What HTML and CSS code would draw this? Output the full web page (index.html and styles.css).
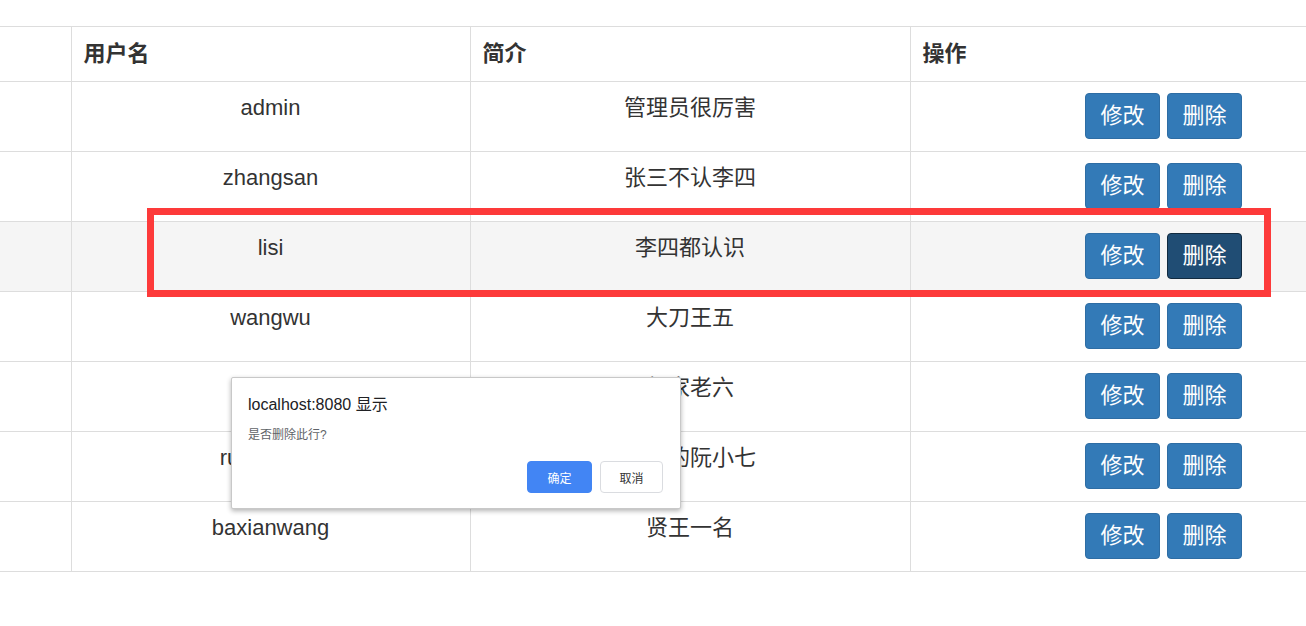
FILE: index.html
```html
<!DOCTYPE html>
<html lang="zh-CN">
<head>
    <meta charset="UTF-8">
    <title>用户列表</title>
    <link rel="stylesheet" href="styles.css">
</head>
<body>
    <div class="page">
        <table class="user-table">
            <colgroup>
                <col class="col-id">
                <col class="col-name">
                <col class="col-desc">
                <col class="col-ops">
            </colgroup>
            <thead>
                <tr>
                    <th></th>
                    <th>用户名</th>
                    <th>简介</th>
                    <th>操作</th>
                </tr>
            </thead>
            <tbody>
                <tr>
                    <td></td>
                    <td>admin</td>
                    <td>管理员很厉害</td>
                    <td><div class="ops"><button class="btn">修改</button><button class="btn">删除</button></div></td>
                </tr>
                <tr>
                    <td></td>
                    <td>zhangsan</td>
                    <td>张三不认李四</td>
                    <td><div class="ops"><button class="btn">修改</button><button class="btn">删除</button></div></td>
                </tr>
                <tr class="hover">
                    <td></td>
                    <td>lisi</td>
                    <td>李四都认识</td>
                    <td><div class="ops"><button class="btn">修改</button><button class="btn active">删除</button></div></td>
                </tr>
                <tr>
                    <td></td>
                    <td>wangwu</td>
                    <td>大刀王五</td>
                    <td><div class="ops"><button class="btn">修改</button><button class="btn">删除</button></div></td>
                </tr>
                <tr>
                    <td></td>
                    <td>zhaoliu</td>
                    <td>赵家老六</td>
                    <td><div class="ops"><button class="btn">修改</button><button class="btn">删除</button></div></td>
                </tr>
                <tr>
                    <td></td>
                    <td>ruanxiaoqi</td>
                    <td>打鱼的阮小七</td>
                    <td><div class="ops"><button class="btn">修改</button><button class="btn">删除</button></div></td>
                </tr>
                <tr>
                    <td></td>
                    <td>baxianwang</td>
                    <td>贤王一名</td>
                    <td><div class="ops"><button class="btn">修改</button><button class="btn">删除</button></div></td>
                </tr>
            </tbody>
        </table>

        <!-- red annotation round the selected row -->
        <div class="mark"></div>

        <!-- browser confirm() -->
        <div class="dialog">
            <div class="dialog-title">localhost:8080 显示</div>
            <div class="dialog-msg">是否删除此行?</div>
            <div class="dialog-btns">
                <button class="dbtn primary">确定</button>
                <button class="dbtn">取消</button>
            </div>
        </div>
    </div>
</body>
</html>
```

FILE: styles.css
```css
* {
    box-sizing: border-box;
    margin: 0;
    padding: 0;
}

body {
    background-color: #fff;
    color: #333;
    font-family: "Liberation Sans", "Noto Sans CJK SC", sans-serif;
    overflow: hidden;
}

.page {
    position: relative;
    width: 1306px;
    height: 626px;
    padding-top: 26px;
}

.user-table {
    width: 1306px;
    border-collapse: collapse;
    table-layout: fixed;
    font-size: 22px;
    line-height: 30px;
}

.col-id { width: 71px; }
.col-name { width: 399px; }
.col-desc { width: 440px; }

.user-table th,
.user-table td {
    border: 1px solid #ddd;
    vertical-align: top;
}

.user-table tr > :first-child { border-left: none; }
.user-table tr > :last-child { border-right: none; }

.user-table th {
    text-align: left;
    font-weight: bold;
    padding: 12px 13px 12px 12px;
}

.user-table td {
    text-align: center;
    padding: 11px 13px 12px;
}

.user-table tr.hover td {
    background-color: #f5f5f5;
}

.ops {
    display: flex;
    justify-content: flex-end;
    gap: 7px;
    padding-right: 51px;
}

.btn {
    font-family: inherit;
    font-size: 22px;
    line-height: 30px;
    padding: 7px 14.5px;
    color: #fff;
    background-color: #337ab7;
    border: 1px solid #2e6da4;
    border-radius: 4px;
}

.btn.active {
    background-color: #204d74;
    border-color: #122b40;
}

.mark {
    position: absolute;
    left: 147px;
    top: 208px;
    width: 1124px;
    height: 89px;
    border: 7px solid #fd3a3a;
}

.dialog {
    position: absolute;
    left: 231px;
    top: 377px;
    width: 450px;
    height: 132px;
    padding: 17px 17px 15px 16px;
    background-color: #fff;
    border: 1px solid #c8c8c8;
    border-radius: 2px;
    box-shadow: 0 2px 5px rgba(0, 0, 0, 0.3);
}

.dialog-title {
    font-size: 16px;
    line-height: 20px;
    color: #202124;
}

.dialog-msg {
    margin-top: 10px;
    font-size: 12px;
    line-height: 20px;
    color: #5f6368;
}

.dialog-btns {
    display: flex;
    justify-content: flex-end;
    gap: 8px;
    margin-top: 16px;
}

.dbtn {
    width: 63px;
    height: 32px;
    font-family: inherit;
    font-size: 12px;
    color: #333;
    background-color: #fff;
    border: 1px solid #dadce0;
    border-radius: 4px;
}

.dbtn.primary {
    width: 65px;
    color: #fff;
    background-color: #4285f4;
    border-color: #4285f4;
}
```
